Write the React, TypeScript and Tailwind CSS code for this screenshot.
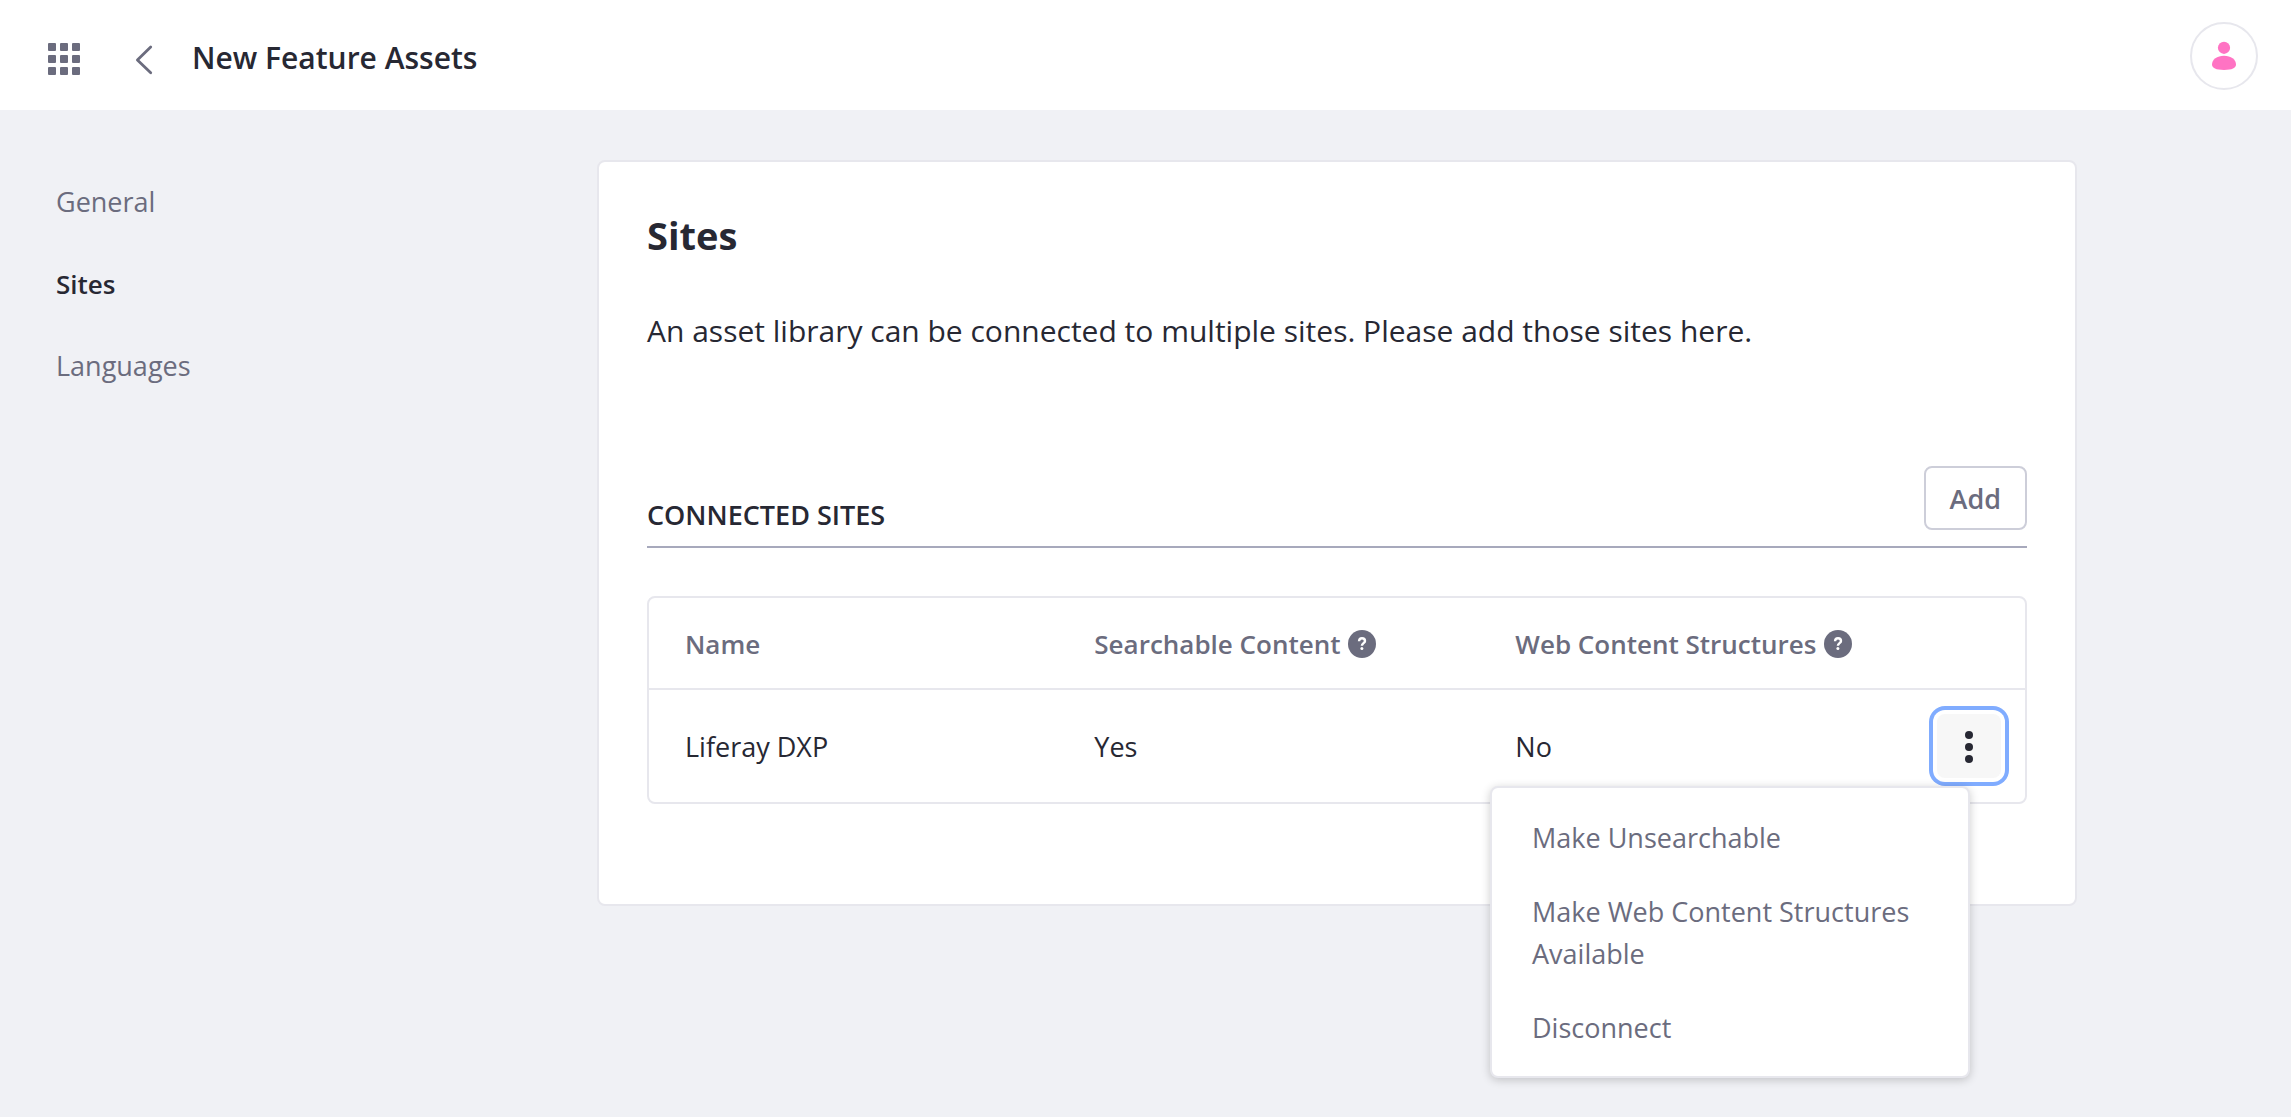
import React from "react";

const HelpIcon = () => (
  <svg viewBox="0 0 28 28" className="size-7 shrink-0" aria-hidden="true">
    <circle cx="14" cy="14" r="14" fill="#6b6c7e" />
    <path
      d="M11 11.300C11.100 9.500 12.200 8.200 14 8.200c1.800 0 3 1.100 3 2.700 0 2.300-3.100 2.200-3.100 4.900"
      fill="none"
      stroke="#fff"
      strokeWidth="2.400"
    />
    <circle cx="13.900" cy="18.500" r="1.500" fill="#fff" />
  </svg>
);

const AppsIcon = () => (
  <svg viewBox="0 0 32 32" className="size-8" fill="#6b6c7e" aria-hidden="true">
    {[0, 12, 24].map((y) =>
      [0, 12, 24].map((x) => <rect key={`${x}-${y}`} x={x} y={y} width="8" height="8" rx="1" />)
    )}
  </svg>
);

const BackIcon = () => (
  <svg viewBox="0 0 32 32" className="size-8" fill="none" stroke="#6b6c7e" aria-hidden="true">
    <path d="M22.700 4 9.400 17l13.300 12.800" strokeWidth="2.800" strokeLinecap="round" strokeLinejoin="round" />
  </svg>
);

const UserIcon = () => (
  <svg viewBox="0 0 32 32" className="size-8" fill="#ff73c3" aria-hidden="true">
    <circle cx="16" cy="7.800" r="6.100" />
    <path d="M16 15.800c7 0 12 3.600 12 8.800 0 3.600-4 5.400-12 5.400s-12-1.800-12-5.400c0-5.200 5-8.800 12-8.800z" />
  </svg>
);

const MoreIcon = () => (
  <svg viewBox="0 0 32 32" className="size-8" fill="#272833" aria-hidden="true">
    <circle cx="16" cy="4" r="4" />
    <circle cx="16" cy="16" r="4" />
    <circle cx="16" cy="28" r="4" />
  </svg>
);

const sections = [
  { label: "General", active: false },
  { label: "Sites", active: true },
  { label: "Languages", active: false },
];

const actions = ["Make Unsearchable", "Make Web Content Structures Available", "Disconnect"];

export default function App() {
  return (
    <div className="min-h-screen bg-[#f0f1f5] font-['Open_Sans','Noto_Sans',sans-serif] text-[27px] leading-[42px] text-[#272833]">
      <header className="flex h-[110px] items-center justify-between bg-white pr-[33px] pl-12">
        <div className="flex items-center pt-2">
          <button type="button" aria-label="Applications">
            <AppsIcon />
          </button>
          <a href="#back" aria-label="Back" className="ml-12">
            <BackIcon />
          </a>
          <h1 className="ml-8 pb-0.5 text-[30px] leading-[48px] font-semibold">New Feature Assets</h1>
        </div>
        <button
          type="button"
          aria-label="User profile"
          className="mt-0.5 flex size-[68px] items-center justify-center rounded-full border-2 border-[#e7e7ed] bg-white"
        >
          <UserIcon />
        </button>
      </header>

      <div className="flex items-start pt-[50px] pb-12">
        <nav className="flex w-[383px] shrink-0 flex-col pt-px pl-14">
          {sections.map((s) => (
            <a
              key={s.label}
              href={`#${s.label.toLowerCase()}`}
              aria-current={s.active ? "page" : undefined}
              className={s.active ? "py-5 text-[26px] font-semibold text-[#272833]" : "py-5 text-[#6b6c7e]"}
            >
              {s.label}
            </a>
          ))}
        </nav>

        <main className="flex flex-1 justify-center px-12">
          <section className="w-full max-w-[1480px] rounded-lg border-2 border-[#e7e7ed] bg-white px-12 pt-[49px] pb-[100px]">
            <h2 className="text-[38px] leading-[48px] font-bold">Sites</h2>
            <p className="mt-12 text-[30px] leading-[48px]">
              An asset library can be connected to multiple sites. Please add those sites here.
            </p>

            <div className="mt-[111px] flex items-end justify-between border-b-2 border-[#a7a9bc] pb-2.5">
              <h3 className="font-semibold uppercase">Connected Sites</h3>
              <button
                type="button"
                className="mb-1.5 h-16 rounded-lg border-2 border-[#cdced9] bg-white px-6 pt-0.5 font-semibold text-[#6b6c7e]"
              >
                Add
              </button>
            </div>

            <div className="mt-12 rounded-lg border-2 border-[#e7e7ed]">
              <table className="w-full table-fixed border-separate border-spacing-0 text-left">
                <thead>
                  <tr className="h-[90px] text-[26px] text-[#6b6c7e]">
                    <th scope="col" className="w-[31.2%] pt-0.5 pl-9 font-semibold">
                      Name
                    </th>
                    <th scope="col" className="w-[30.6%] pt-0.5 pl-4 font-semibold">
                      <span className="flex items-center gap-2">
                        Searchable Content <HelpIcon />
                      </span>
                    </th>
                    <th scope="col" className="pt-0.5 pl-4 font-semibold">
                      <span className="flex items-center gap-2">
                        Web Content Structures <HelpIcon />
                      </span>
                    </th>
                    <th scope="col" aria-label="Actions" className="w-[104px]" />
                  </tr>
                </thead>
                <tbody>
                  <tr>
                    <td className="border-t-2 border-[#e7e7ed] pt-0.5 pl-9">Liferay DXP</td>
                    <td className="border-t-2 border-[#e7e7ed] pt-0.5 pl-4">Yes</td>
                    <td className="border-t-2 border-[#e7e7ed] pt-0.5 pl-4">No</td>
                    <td className="border-t-2 border-[#e7e7ed] py-6 pr-6">
                      <div className="relative ml-auto size-16">
                        <button
                          type="button"
                          aria-label="Show actions"
                          aria-expanded="true"
                          className="flex size-16 items-center justify-center rounded-lg bg-[#f7f7f7] pt-0.5 ring-4 ring-[#80acff] ring-offset-4 ring-offset-white"
                        >
                          <MoreIcon />
                        </button>
                        <ul className="absolute top-[72px] right-[31px] z-10 w-[480px] rounded-lg border-2 border-[#e7e7ed] bg-white pt-[13px] pb-[11px] shadow-[0_2px_10px_0_rgba(0,0,0,0.2)]">
                          {actions.map((a) => (
                            <li key={a}>
                              <button type="button" className="w-full px-10 py-4 text-left text-[#6b6c7e]">
                                {a}
                              </button>
                            </li>
                          ))}
                        </ul>
                      </div>
                    </td>
                  </tr>
                </tbody>
              </table>
            </div>
          </section>
        </main>
      </div>
    </div>
  );
}
